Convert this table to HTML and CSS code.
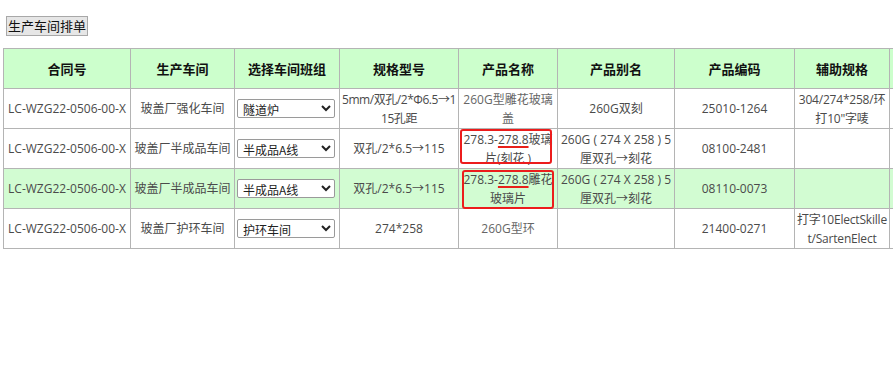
FILE: index.html
```html
<!DOCTYPE html>
<html lang="zh-CN">
<head>
<meta charset="utf-8">
<title>生产车间排单</title>
<link rel="stylesheet" href="styles.css">
</head>
<body>
<div class="page">
  <button class="btn-plan" type="button">生产车间排单</button>
  <div class="table-wrap">
    <table class="plan">
      <colgroup>
        <col class="c-contract">
        <col class="c-shop">
        <col class="c-team">
        <col class="c-spec">
        <col class="c-name">
        <col class="c-alias">
        <col class="c-code">
        <col class="c-aux">
        <col class="c-extra">
      </colgroup>
      <thead>
        <tr>
          <th>合同号</th>
          <th>生产车间</th>
          <th>选择车间班组</th>
          <th>规格型号</th>
          <th>产品名称</th>
          <th>产品别名</th>
          <th>产品编码</th>
          <th>辅助规格</th>
          <th></th>
        </tr>
      </thead>
      <tbody>
        <tr>
          <td>LC-WZG22-0506-00-X</td>
          <td>玻盖厂强化车间</td>
          <td><select class="team"><option>隧道炉</option></select></td>
          <td class="wrap tight">5mm/双孔/2*Φ6.5→115孔距</td>
          <td class="light">260G型雕花玻璃盖</td>
          <td>260G双刻</td>
          <td>25010-1264</td>
          <td class="wrap">304/274*258/环打10"字唛</td>
          <td></td>
        </tr>
        <tr>
          <td>LC-WZG22-0506-00-X</td>
          <td>玻盖厂半成品车间</td>
          <td><select class="team"><option>半成品A线</option></select></td>
          <td>双孔/2*6.5→115</td>
          <td class="marked">278.3-<span class="uline">278.8</span>玻璃片(刻花 )<span class="mark mark-a"></span></td>
          <td>260G ( 274 X 258 ) 5厘双孔→刻花</td>
          <td>08100-2481</td>
          <td></td>
          <td></td>
        </tr>
        <tr class="hl">
          <td>LC-WZG22-0506-00-X</td>
          <td>玻盖厂半成品车间</td>
          <td><select class="team"><option>半成品A线</option></select></td>
          <td>双孔/2*6.5→115</td>
          <td class="marked">278.3-<span class="uline">278.8</span>雕花玻璃片<span class="mark mark-b"></span></td>
          <td>260G ( 274 X 258 ) 5厘双孔→刻花</td>
          <td>08110-0073</td>
          <td></td>
          <td></td>
        </tr>
        <tr>
          <td>LC-WZG22-0506-00-X</td>
          <td>玻盖厂护环车间</td>
          <td><select class="team"><option>护环车间</option></select></td>
          <td>274*258</td>
          <td class="light">260G型环</td>
          <td></td>
          <td>21400-0271</td>
          <td class="wrap">打字10ElectSkillet/SartenElect</td>
          <td></td>
        </tr>
      </tbody>
    </table>
  </div>
</div>
</body>
</html>
```

FILE: styles.css
```css
html, body {
  margin: 0;
  padding: 0;
  background: #fff;
  overflow: hidden;
}

.page {
  padding: 16px 0 0 3px;
  font-family: "Open Sans", "Noto Sans CJK SC", sans-serif;
}

.btn-plan {
  display: block;
  margin: 0 0 12px 3px;
  height: 20px;
  padding: 0 1px;
  font: 13px/18px "Noto Sans CJK SC", sans-serif;
  color: #111;
  background: #e6e6e6;
  border: 1px solid #a8a8a8;
  border-radius: 0;
}

.table-wrap {
  overflow: hidden;
}

.plan {
  border-collapse: collapse;
  table-layout: fixed;
  width: 947px;
  font-size: 12px;
  color: #4a4a4a;
}

.c-contract { width: 127px; }
.c-shop { width: 104px; }
.c-team { width: 105px; }
.c-spec { width: 119px; }
.c-name { width: 99px; }
.c-alias { width: 117px; }
.c-code { width: 120px; }
.c-aux { width: 95px; }
.c-extra { width: 61px; }

.plan th,
.plan td {
  border: 1px solid #b4b4b4;
  height: 39px;
  padding: 0 2px;
  text-align: center;
  vertical-align: middle;
  line-height: 19px;
  word-break: break-all;
}

.plan td.wrap {
  padding: 0 1px;
  letter-spacing: -0.2px;
}

.plan td.tight {
  padding: 0;
  letter-spacing: -0.45px;
}

.plan th {
  background: #ccffcc;
  color: #111;
  font-size: 13px;
  font-weight: bold;
  font-family: "Noto Sans CJK SC", sans-serif;
}

.plan tr.hl td {
  background: #d2fcd2;
}

.plan td.light {
  color: #666;
}

.team {
  width: 98px;
  height: 19px;
  padding: 0 0 0 1px;
  font: 12px "Noto Sans CJK SC", sans-serif;
  color: #222;
  border: 1px solid #9a9a9a;
  border-radius: 2px;
  background: #fff;
  display: block;
}

/* red review marks over the product-name cells */
.marked {
  position: relative;
}

.uline {
  text-decoration: underline;
  text-decoration-color: #e8201a;
  text-decoration-thickness: 2px;
  text-underline-offset: 2px;
}

.mark {
  position: absolute;
  border: 2px solid #ec1c1c;
  border-radius: 3px;
  pointer-events: none;
}

.mark-a {
  left: 1px;
  top: 0;
  width: 88px;
  height: 31px;
}

.mark-b {
  left: 3px;
  top: 1px;
  width: 88px;
  height: 35px;
}
```
